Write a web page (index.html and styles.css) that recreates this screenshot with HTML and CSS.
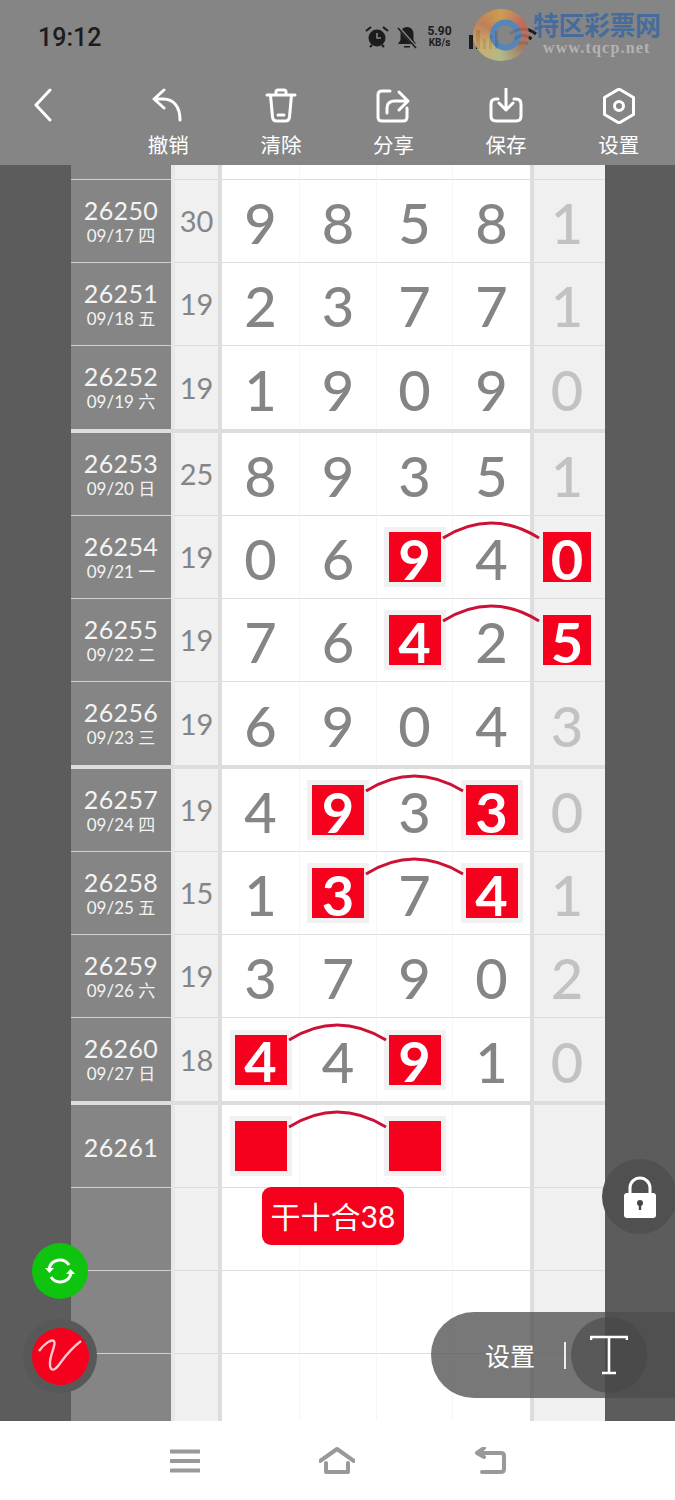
FILE: index.html
```html
<!DOCTYPE html>
<html lang="zh">
<head>
<meta charset="utf-8">
<title>走势图</title>
<link rel="stylesheet" href="styles.css">
</head>
<body>
<header class="header">
  <div class="status">
    <span class="time">19:12</span>
    <div class="status-icons">
      <svg class="si" width="26" height="26" viewBox="0 0 26 26"><circle cx="13" cy="14" r="8.5" fill="#1c1c1c"/><path d="M13 9v5h4" stroke="#858585" stroke-width="1.6" fill="none"/><path d="M2 7l5-4M24 7l-5-4M6 23l2-2M20 23l-2-2" stroke="#1c1c1c" stroke-width="2.2" fill="none"/></svg>
      <svg class="si" width="24" height="26" viewBox="0 0 24 26"><path d="M12 3c-4 0-6.500 3-6.500 7v6L3 20h18l-2.500-4v-6c0-4-2.500-7-6.500-7z" fill="#1c1c1c"/><path d="M9 22h6v1.500H9z" fill="#1c1c1c"/><path d="M3 3l18 20" stroke="#858585" stroke-width="3"/><path d="M3 4l18 20" stroke="#1c1c1c" stroke-width="1.600"/></svg>
      <div class="speed"><span>5.90</span><span class="speed-unit">KB/s</span></div>
      <svg class="si bars" width="36" height="24" viewBox="0 0 36 24"><path d="M2 10h4v14H2zM9 5h4v19H9zM16 14h3v10h-3zM22 10h3v14h-3zM28 6h3v18h-3z" fill="#1c1c1c"/></svg>
      <svg class="si" width="30" height="24" viewBox="0 0 30 24"><path d="M2 9q13-10 26 0M6.500 14q8.500-7 17 0M11 19q4-3 8 0" stroke="#1c1c1c" stroke-width="3" fill="none"/></svg>
    </div>
  </div>
  <div class="toolbar">
    <button class="back" type="button" aria-label="返回"><svg width="20" height="34" viewBox="0 0 20 34"><path d="M17 2L3 17l14 15" class="ic"/></svg></button>
    <div class="tool"><svg width="36" height="36" viewBox="0 0 36 36"><path class="ic" d="M14 2L4 11l10 9M5 11h8c11 0 17 8 17 21"/></svg><span>撤销</span></div>
    <div class="tool"><svg width="36" height="36" viewBox="0 0 36 36"><path class="ic" d="M4 7h28M13 7V4q0-2 2-2h6q2 0 2 2v3M7.500 7l2 22q.5 4 4 4h9q3.500 0 4-4l2-22M15 27h6"/></svg><span>清除</span></div>
    <div class="tool"><svg width="36" height="36" viewBox="0 0 36 36"><path class="ic" d="M15 3H7Q3 3 3 7v22q0 4 4 4h21q4 0 4-4v-9M12 25v-5q0-7 8-7h11M24 4l9 9-9 9"/></svg><span>分享</span></div>
    <div class="tool"><svg width="36" height="36" viewBox="0 0 36 36"><path class="ic" d="M10 11H8q-5 0-5 5v12q0 5 5 5h20q5 0 5-5V16q0-5-5-5h-2M18 1v21M11 15l7 7 7-7"/></svg><span>保存</span></div>
    <div class="tool"><svg width="36" height="36" viewBox="0 0 36 36"><path class="ic" d="M18 1l14.500 8.500v17L18 35 3.500 26.500v-17z"/><circle class="ic" cx="18" cy="18" r="4.500"/></svg><span>设置</span></div>
  </div>
</header>

<main class="main">
  <div class="table">
    <div class="row row-top"><div class="id"></div><div class="sum"></div><div class="d"></div><div class="d"></div><div class="d"></div><div class="d"></div><div class="last"></div></div>

    <section class="group">
      <div class="row"><div class="id"><b>26250</b><small>09/17 四</small></div><div class="sum">30</div><div class="d">9</div><div class="d">8</div><div class="d">5</div><div class="d">8</div><div class="last">1</div></div>
      <div class="row"><div class="id"><b>26251</b><small>09/18 五</small></div><div class="sum">19</div><div class="d">2</div><div class="d">3</div><div class="d">7</div><div class="d">7</div><div class="last">1</div></div>
      <div class="row"><div class="id"><b>26252</b><small>09/19 六</small></div><div class="sum">19</div><div class="d">1</div><div class="d">9</div><div class="d">0</div><div class="d">9</div><div class="last">0</div></div>
    </section>

    <section class="group">
      <div class="row"><div class="id"><b>26253</b><small>09/20 日</small></div><div class="sum">25</div><div class="d">8</div><div class="d">9</div><div class="d">3</div><div class="d">5</div><div class="last">1</div></div>
      <div class="row"><div class="id"><b>26254</b><small>09/21 一</small></div><div class="sum">19</div><div class="d">0</div><div class="d">6</div><div class="d"><span class="ball">9</span></div><div class="d">4</div><div class="last"><span class="ball">0</span></div><svg class="arc" viewBox="0 0 534 83"><path d="M372 22Q420-8 468 22"/></svg></div>
      <div class="row"><div class="id"><b>26255</b><small>09/22 二</small></div><div class="sum">19</div><div class="d">7</div><div class="d">6</div><div class="d"><span class="ball">4</span></div><div class="d">2</div><div class="last"><span class="ball">5</span></div><svg class="arc" viewBox="0 0 534 83"><path d="M372 22Q420-8 468 22"/></svg></div>
      <div class="row"><div class="id"><b>26256</b><small>09/23 三</small></div><div class="sum">19</div><div class="d">6</div><div class="d">9</div><div class="d">0</div><div class="d">4</div><div class="last">3</div></div>
    </section>

    <section class="group">
      <div class="row"><div class="id"><b>26257</b><small>09/24 四</small></div><div class="sum">19</div><div class="d">4</div><div class="d"><span class="ball">9</span></div><div class="d">3</div><div class="d"><span class="ball">3</span></div><div class="last">0</div><svg class="arc" viewBox="0 0 534 83"><path d="M295 22Q343-8 392 22"/></svg></div>
      <div class="row"><div class="id"><b>26258</b><small>09/25 五</small></div><div class="sum">15</div><div class="d">1</div><div class="d"><span class="ball">3</span></div><div class="d">7</div><div class="d"><span class="ball">4</span></div><div class="last">1</div><svg class="arc" viewBox="0 0 534 83"><path d="M295 22Q343-8 392 22"/></svg></div>
      <div class="row"><div class="id"><b>26259</b><small>09/26 六</small></div><div class="sum">19</div><div class="d">3</div><div class="d">7</div><div class="d">9</div><div class="d">0</div><div class="last">2</div></div>
      <div class="row"><div class="id"><b>26260</b><small>09/27 日</small></div><div class="sum">18</div><div class="d"><span class="ball">4</span></div><div class="d">4</div><div class="d"><span class="ball">9</span></div><div class="d">1</div><div class="last">0</div><svg class="arc" viewBox="0 0 534 83"><path d="M218 22Q266-8 315 22"/></svg></div>
    </section>

    <section class="group">
      <div class="row"><div class="id"><b>26261</b></div><div class="sum"></div><div class="d"><span class="ball"></span></div><div class="d"></div><div class="d"><span class="ball"></span></div><div class="d"></div><div class="last"></div><svg class="arc" viewBox="0 0 534 83"><path d="M218 22Q266-8 315 22"/></svg></div>
      <div class="row"><div class="id"></div><div class="sum"></div><div class="d"></div><div class="d"></div><div class="d"></div><div class="d"></div><div class="last"></div><div class="tip">干十合38</div></div>
      <div class="row"><div class="id"></div><div class="sum"></div><div class="d"></div><div class="d"></div><div class="d"></div><div class="d"></div><div class="last"></div></div>
      <div class="row"><div class="id"></div><div class="sum"></div><div class="d"></div><div class="d"></div><div class="d"></div><div class="d"></div><div class="last"></div></div>
    </section>
  </div>
</main>

<nav class="nav">
  <svg width="30" height="24" viewBox="0 0 30 24"><path class="nv" d="M1 2.500h28M1 12h28M1 21.500h28"/></svg>
  <svg width="36" height="28" viewBox="0 0 36 28"><path class="nv" d="M1 14L18 2l17 12M7 16v9h22v-9"/></svg>
  <svg width="32" height="28" viewBox="0 0 32 28"><path class="nv" d="M3 6h24q3 0 3 3v13q0 3-3 3H8M10 1L3 6l7 4"/></svg>
</nav>

<div class="watermark">
  <div class="wm-logo"></div>
  <div class="wm-text"><span class="wm-title">特区彩票网</span><span class="wm-url">www.tqcp.net</span></div>
</div>

<div class="fab fab-green"><svg width="32" height="32" viewBox="0 0 32 32"><path d="M5 14A11 11 0 0 1 25 10M27 18A11 11 0 0 1 7 22" fill="none" stroke="#fff" stroke-width="3"/><path d="M1 13h9l-4.500 5zM31 19h-9l4.500-5z" fill="#fff"/></svg></div>
<div class="fab-ring"><div class="fab-red"><svg width="46" height="40" viewBox="0 0 46 40"><path d="M2 15C7 8 14 3 17 5c3 3-5 14-4 24 .5 6 4 6 8 1C27 22 32 14 44 5" fill="none" stroke="#ffc9d0" stroke-width="2.400"/></svg></div></div>
<div class="lock"><svg width="34" height="42" viewBox="0 0 34 42"><path d="M7 18V12a10 10 0 0 1 20 0v6" fill="none" stroke="#fff" stroke-width="3"/><rect x="1" y="17" width="32" height="25" rx="3" fill="#fff"/><circle cx="17" cy="27" r="3" fill="#444"/><path d="M15.800 28h2.400v6h-2.400z" fill="#444"/></svg></div>
<div class="pill">
  <span class="pill-label">设置</span>
  <span class="pill-div"></span>
  <div class="pill-t"><svg width="38" height="40" viewBox="0 0 38 40"><path d="M1 5V2h36v3M19 2v36M12 38h14" fill="none" stroke="#fff" stroke-width="2.600"/></svg></div>
</div>
</body>
</html>
```

FILE: styles.css
```css
* { box-sizing: border-box; }
html, body { margin: 0; padding: 0; }
body {
  width: 675px;
  height: 1500px;
  position: relative;
  overflow: hidden;
  display: flex;
  flex-direction: column;
  background: #fff;
  font-family: "Lato", "Noto Sans CJK SC", sans-serif;
}

/* header */
.header { height: 165px; background: #858585; flex: none; }
.status { height: 75px; display: flex; align-items: center; padding: 0 0 1px 38px; }
.time { font-size: 25px; font-weight: 500; color: #1c1c1c; font-family: "Roboto", sans-serif; }
.status-icons { display: flex; align-items: center; margin-left: 263px; gap: 5px; }
.si { flex: none; }
.speed { display: flex; flex-direction: column; font: 700 12px/12px "Roboto", sans-serif; color: #1c1c1c; align-items: center; margin: 0 6px 0 3px; }
.speed-unit { font-size: 10px; }
.bars { margin-left: 4px; }
.toolbar { height: 90px; display: flex; }
.back { width: 112px; padding: 13px 0 0 33px; background: none; border: 0; text-align: left; height: 90px; display: flex; align-items: flex-start; }
.tool { width: 112.6px; display: flex; flex-direction: column; align-items: center; padding-top: 13px; color: #fff; font: 400 20.5px/30px "Noto Sans CJK SC", sans-serif; }
.tool span { margin-top: 5px; }
.ic { fill: none; stroke: #fff; stroke-width: 3; stroke-linecap: round; stroke-linejoin: round; }

/* table */
.main { height: 1256px; flex: none; background: #5c5c5c; padding-left: 71px; overflow: hidden; }
.table { width: 534px; background: #fff; }
.group { border-bottom: 4px solid #ddd; }
.row {
  position: relative;
  height: 83px;
  display: grid;
  grid-template-columns: 100px 51px 78px 77px 76px 77px 75px;
}
.row > div { border-bottom: 1px solid #dedede; }
.group .row:last-child > div { border-bottom: 0; }
.row-top { height: 15px; }
.id {
  background: #858585;
  border-bottom-color: #d0d0d0 !important;
  color: #f4f4f4;
  display: flex;
  flex-direction: column;
  align-items: center;
  justify-content: center;
  padding-top: 1px;
}
.id b { font-weight: 400; font-size: 25px; line-height: 28px; letter-spacing: .4px; }
.id small { font-size: 17px; line-height: 24px; }
.sum {
  background: #f0f0f0;
  border-left: 4px solid #e8e8e8;
  border-right: 4px solid #ddd;
  color: #858585;
  font-size: 29px;
  display: flex;
  align-items: center;
  justify-content: center;
  padding-bottom: 1px;
}
.d, .last {
  display: flex;
  align-items: center;
  justify-content: center;
  font-size: 56px;
  font-weight: 500;
  color: #858585;
  line-height: 1;
  padding-top: 4px;
}
.d { border-right: 1px solid #f5f5f5; }
.d:nth-child(6) { border-right: 0; }
.last {
  background: #f0f0f0;
  border-left: 4px solid #ddd;
  padding-right: 5px;
  color: #c2c2c2;
}
.ball {
  width: 52px;
  height: 50px;
  margin-top: -4px;
  background: #f5001d;
  color: #fff;
  font-weight: 700;
  display: flex;
  align-items: center;
  justify-content: center;
  padding-top: 3px;
  box-shadow: 0 0 0 5px #f1f1f1;
}
.last .ball { width: 48px; }
.arc { position: absolute; left: 0; top: 0; width: 534px; height: 83px; overflow: visible; pointer-events: none; }
.arc path { fill: none; stroke: #cc1136; stroke-width: 3; }
.tip {
  position: absolute;
  left: 191px;
  top: -1px;
  width: 142px;
  height: 58px;
  border: 0 !important;
  border-radius: 9px;
  background: #f5001d;
  color: #fff;
  font: 400 30px/58px "Lato", "Noto Sans CJK SC", sans-serif;
  text-align: center;
}

/* nav */
.nav { flex: 1; display: flex; align-items: center; justify-content: center; gap: 119px; padding-top: 1px; }
.nv { fill: none; stroke: #999; stroke-width: 4; stroke-linejoin: round; stroke-linecap: round; }

/* overlays */
.watermark { position: absolute; left: 473px; top: 9px; display: flex; gap: 6px; }
.wm-logo {
  width: 56px;
  height: 52px;
  border-radius: 50%;
  background:
    radial-gradient(circle at 58% 50%, #858585 0 9px, #4f86c0 10px 15px, transparent 16px),
    conic-gradient(#d9a24a, #c8695a, #a77a62, #b9c48a, #d8b46a, #c97f50, #d9a24a);
  opacity: .85;
}
.wm-text { display: flex; flex-direction: column; align-items: center; margin-left: -2px; }
.wm-title { font: 700 26px/30px "Noto Sans CJK SC", sans-serif; color: rgba(50, 100, 165, .75); letter-spacing: -.5px; }
.wm-url { font: 700 16px/18px "Liberation Serif", serif; color: rgba(200, 200, 200, .7); letter-spacing: 1.2px; }

.fab { position: absolute; }
.fab-green {
  left: 32px;
  top: 1243px;
  width: 56px;
  height: 56px;
  border-radius: 50%;
  background: #0ec40e;
  display: flex;
  align-items: center;
  justify-content: center;
}
.fab-ring {
  position: absolute;
  left: 23px;
  top: 1319px;
  width: 74px;
  height: 74px;
  border-radius: 50%;
  background: #585858;
  display: flex;
  align-items: center;
  justify-content: center;
}
.fab-red {
  width: 57px;
  height: 57px;
  border-radius: 50%;
  background: #f5001d;
  display: flex;
  align-items: center;
  justify-content: center;
}
.lock {
  position: absolute;
  left: 602px;
  top: 1159px;
  width: 75px;
  height: 75px;
  border-radius: 50%;
  background: #505050;
  display: flex;
  align-items: center;
  justify-content: center;
}
.pill {
  position: absolute;
  left: 431px;
  top: 1312px;
  width: 244px;
  height: 86px;
  border-radius: 43px 0 0 43px;
  background: rgba(76, 76, 76, .755);
  display: flex;
  align-items: center;
  color: #fff;
}
.pill-label { font: 400 25px/30px "Noto Sans CJK SC", sans-serif; margin-left: 54px; width: 51px; flex: none; }
.pill-div { width: 2px; height: 27px; background: #eee; margin-left: 28px; flex: none; }
.pill-t {
  width: 76px;
  height: 76px;
  border-radius: 50%;
  background: rgba(70, 70, 70, .6);
  margin-left: 5px;
  flex: none;
  display: flex;
  align-items: center;
  justify-content: center;
}
```
